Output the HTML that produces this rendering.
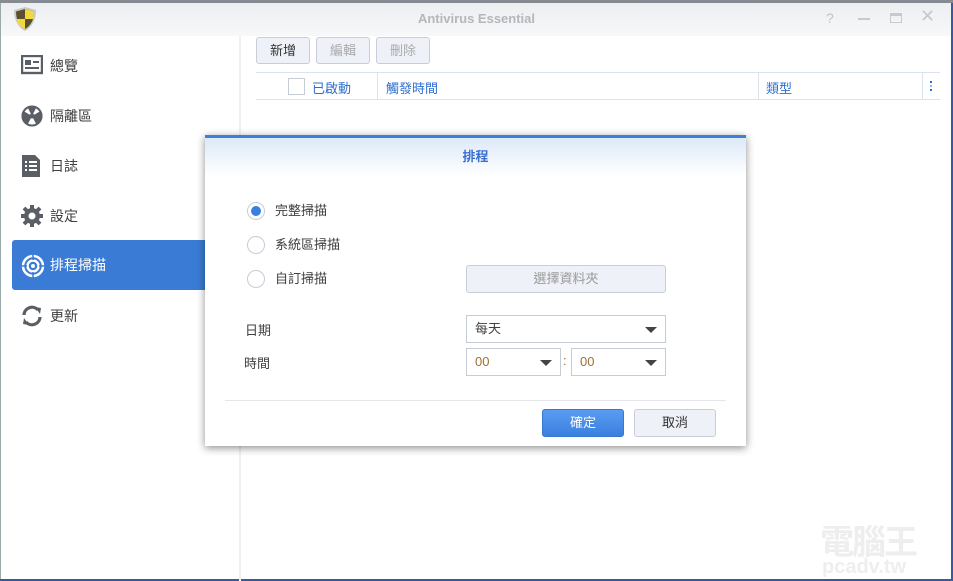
<!DOCTYPE html><html><head><meta charset="utf-8"><style>
*{margin:0;padding:0;box-sizing:border-box}
body{width:953px;height:581px;overflow:hidden;background:#fff;font-family:"Liberation Sans","Noto Sans CJK TC",sans-serif;font-size:13px;color:#404040;position:relative}
.a{position:absolute}
.top{left:0;top:0;width:953px;height:3px;background:#868b93}
.tb{left:0;top:3px;width:953px;height:33px;background:linear-gradient(#eceef1,#f7f8f9)}
.title{left:0;width:953px;top:11px;text-align:center;font-weight:bold;font-size:13px;color:#b4b7bb}
.rb{right:0;top:3px;width:2px;height:578px;background:#355a9d}
.bb{left:0;bottom:0;width:953px;height:2px;background:#355a9d}
.lb{left:0;top:3px;width:1px;height:578px;background:#9aa}
.div{left:239px;top:36px;width:2px;height:545px;background:#eef0f2}
.nav{left:12px;width:195px;height:50px;line-height:50px;padding-left:38px;font-size:14px;color:#404040}
.nav svg{position:absolute;left:9px;top:14px}
.sel{background:#3a7bd5;color:#fff;border-radius:3px 0 0 3px}
.btn{height:27px;top:37px;border:1px solid #c8ced8;border-radius:3px;background:#eef1f7;text-align:center;line-height:25px;font-size:13px}
.hdr{left:256px;top:72px;width:684px;height:28px;border-top:1px solid #dbe3ec;border-bottom:1px solid #dbe3ec;color:#2f6fd0}
.modal{left:205px;top:135px;width:541px;height:311px;background:#fff;border-top:3px solid #3f7fd8;box-shadow:0 2px 8px rgba(0,0,0,.45)}
.mh{left:0;top:0;width:541px;height:38px;background:linear-gradient(#dde9f8,#fff);text-align:center;line-height:38px;color:#3a6fd0;font-weight:bold;font-size:13px}
.rad{width:18px;height:18px;border:1px solid #c5ccd6;border-radius:50%;background:#fff}
.sel2{border:1px solid #c5ccd6;height:28px;background:#fff;line-height:26px;padding-left:8px}
.arr{position:absolute;right:8px;top:11px;width:0;height:0;border-left:6px solid transparent;border-right:6px solid transparent;border-top:6px solid #444}
</style></head><body>
<div class="a top"></div><div class="a tb"></div>
<div class="a title">Antivirus Essential</div>
<svg class="a" style="left:12px;top:6px" width="26" height="26" viewBox="0 0 26 26"><path d="M13 1 L24 4 C24 14 20 21 13 25 C6 21 2 14 2 4Z" fill="#c9c9c9"/><path d="M13 3 L22 5.5 C22 14 19 19.5 13 23 C7 19.5 4 14 4 5.5Z" fill="#5b4f32"/><path d="M13 3 L22 5.5 C22 9 21.8 11 21.5 13 L13 13Z M13 13 L4.5 13 C5.5 18 8.5 21 13 23Z" fill="#f2d93b"/></svg>
<div class="a" style="left:826px;top:10px;color:#c2c4c7;font-size:14px">?</div>
<div class="a" style="left:858px;top:18px;width:12px;height:2px;background:#c8c9cc"></div>
<div class="a" style="left:890px;top:13px;width:12px;height:10px;border:1px solid #c8c9cc;border-top-width:3px"></div>
<div class="a" style="left:920px;top:6px;color:#c8c9cc;font-size:18px">✕</div>
<div class="a lb"></div><div class="a rb"></div><div class="a bb"></div>
<div class="a div"></div>
<div class="a nav" style="top:41px"><svg width="22" height="20" viewBox="0 0 22 20"><rect x="1" y="1" width="20" height="17" fill="none" stroke="#5a5f66" stroke-width="2.4"/><rect x="4" y="5" width="6" height="5" fill="#5a5f66"/><rect x="12" y="6" width="6" height="2" fill="#5a5f66"/><rect x="4" y="12" width="14" height="2" fill="#5a5f66"/></svg>總覽</div>
<div class="a nav" style="top:91px"><svg width="22" height="22" viewBox="0 0 22 22"><circle cx="11" cy="11" r="10.5" fill="#5a5f66"/><g fill="#fff"><path d="M11 11 L2.3 6 A10 10 0 0 1 6.5 2.2Z"/><path d="M11 11 L15.5 2.2 A10 10 0 0 1 19.7 6Z"/><path d="M11 11 L15.5 19.8 A10 10 0 0 1 6.5 19.8Z"/></g><circle cx="11" cy="11" r="2.5" fill="#5a5f66"/><circle cx="11" cy="11" r="9.5" fill="none" stroke="#5a5f66" stroke-width="2"/></svg>隔離區</div>
<div class="a nav" style="top:141px"><svg width="20" height="22" viewBox="0 0 20 22"><path d="M1 0H14L19 5V22H1Z" fill="#5a5f66"/><g fill="#fff"><rect x="4" y="6" width="2" height="2"/><rect x="8" y="6" width="8" height="2"/><rect x="4" y="10" width="2" height="2"/><rect x="8" y="10" width="8" height="2"/><rect x="4" y="14" width="2" height="2"/><rect x="8" y="14" width="8" height="2"/></g></svg>日誌</div>
<div class="a nav" style="top:191px"><svg width="22" height="22" viewBox="0 0 22 22"><circle cx="11" cy="11" r="8" fill="#5a5f66"/><g stroke="#5a5f66" stroke-width="4"><path d="M11 0V22M0 11H22M3 3L19 19M19 3L3 19"/></g><circle cx="11" cy="11" r="3.5" fill="#fff"/></svg>設定</div>
<div class="a nav sel" style="top:240px"><svg width="24" height="24" viewBox="0 0 24 24" fill="none" stroke="#fff"><circle cx="12" cy="12" r="10" stroke-width="2.5"/><circle cx="12" cy="12" r="5.5" stroke-width="2.5"/><circle cx="12" cy="12" r="1.5" fill="#fff"/><path d="M12 0V6M12 18V24M0 12H6M18 12H24" stroke="#3a7bd5" stroke-width="1.5"/></svg>排程掃描</div>
<div class="a nav" style="top:291px"><svg width="22" height="22" viewBox="0 0 22 22" fill="none" stroke="#5a5f66" stroke-width="3.2"><path d="M3 10A8 8 0 0 1 17 5"/><path d="M19 12A8 8 0 0 1 5 17"/><path d="M14 2L20 3L19 9Z M8 20L2 19L3 13Z" fill="#5a5f66" stroke="none"/></svg>更新</div>
<div class="a btn" style="left:256px;width:54px;color:#333">新增</div>
<div class="a btn" style="left:316px;width:54px;color:#aaa">編輯</div>
<div class="a btn" style="left:376px;width:54px;color:#aaa">刪除</div>
<div class="a hdr">
<div class="a" style="left:32px;top:5px;width:17px;height:17px;border:1px solid #c5ccd6"></div>
<div class="a" style="left:56px;top:5px">已啟動</div>
<div class="a" style="left:121px;top:0;width:1px;height:26px;background:#dbe3ec"></div>
<div class="a" style="left:130px;top:5px">觸發時間</div>
<div class="a" style="left:502px;top:0;width:1px;height:26px;background:#dbe3ec"></div>
<div class="a" style="left:510px;top:5px">類型</div>
<div class="a" style="left:666px;top:0;width:1px;height:26px;background:#dbe3ec"></div>
<div class="a" style="left:674px;top:8px;width:2px;height:10px;border-top:2px dotted #2f6fd0;border-bottom:2px solid #2f6fd0;background:linear-gradient(transparent 40%,#2f6fd0 40%,#2f6fd0 60%,transparent 60%)"></div>
</div>
<div class="a modal">
<div class="a mh">排程</div>
<div class="a rad" style="left:42px;top:64px"><div class="a" style="left:3px;top:3px;width:10px;height:10px;border-radius:50%;background:#3a7fe0"></div></div>
<div class="a" style="left:70px;top:62px">完整掃描</div>
<div class="a rad" style="left:42px;top:98px"></div><div class="a" style="left:70px;top:96px">系統區掃描</div>
<div class="a rad" style="left:42px;top:132px"></div><div class="a" style="left:70px;top:130px">自訂掃描</div>
<div class="a btn" style="left:261px;top:127px;width:200px;height:28px;line-height:26px;color:#999">選擇資料夾</div>
<div class="a" style="left:40px;top:182px">日期</div>
<div class="a" style="left:39px;top:215px">時間</div>
<div class="a sel2" style="left:261px;top:177px;width:200px">每天<div class="arr"></div></div>
<div class="a sel2" style="left:261px;top:210px;width:95px;color:#a07030">00<div class="arr"></div></div>
<div class="a" style="left:358px;top:215px;color:#a07030">:</div>
<div class="a sel2" style="left:366px;top:210px;width:95px;color:#a07030">00<div class="arr"></div></div>
<div class="a" style="left:20px;top:262px;width:501px;height:1px;background:#e4e6e9"></div>
<div class="a btn" style="left:337px;top:271px;width:82px;height:28px;line-height:26px;background:linear-gradient(#5a9cf0,#3a80e0);border-color:#3a78d0;color:#fff">確定</div>
<div class="a btn" style="left:429px;top:271px;width:82px;height:28px;line-height:26px;color:#333">取消</div>
</div>
<div class="a" style="left:820px;top:515px;font-size:34px;font-weight:bold;color:#eee;letter-spacing:-2px">電腦王</div>
<div class="a" style="left:822px;top:556px;font-size:20px;font-weight:bold;color:#eee">pcadv.tw</div>
</body></html>
